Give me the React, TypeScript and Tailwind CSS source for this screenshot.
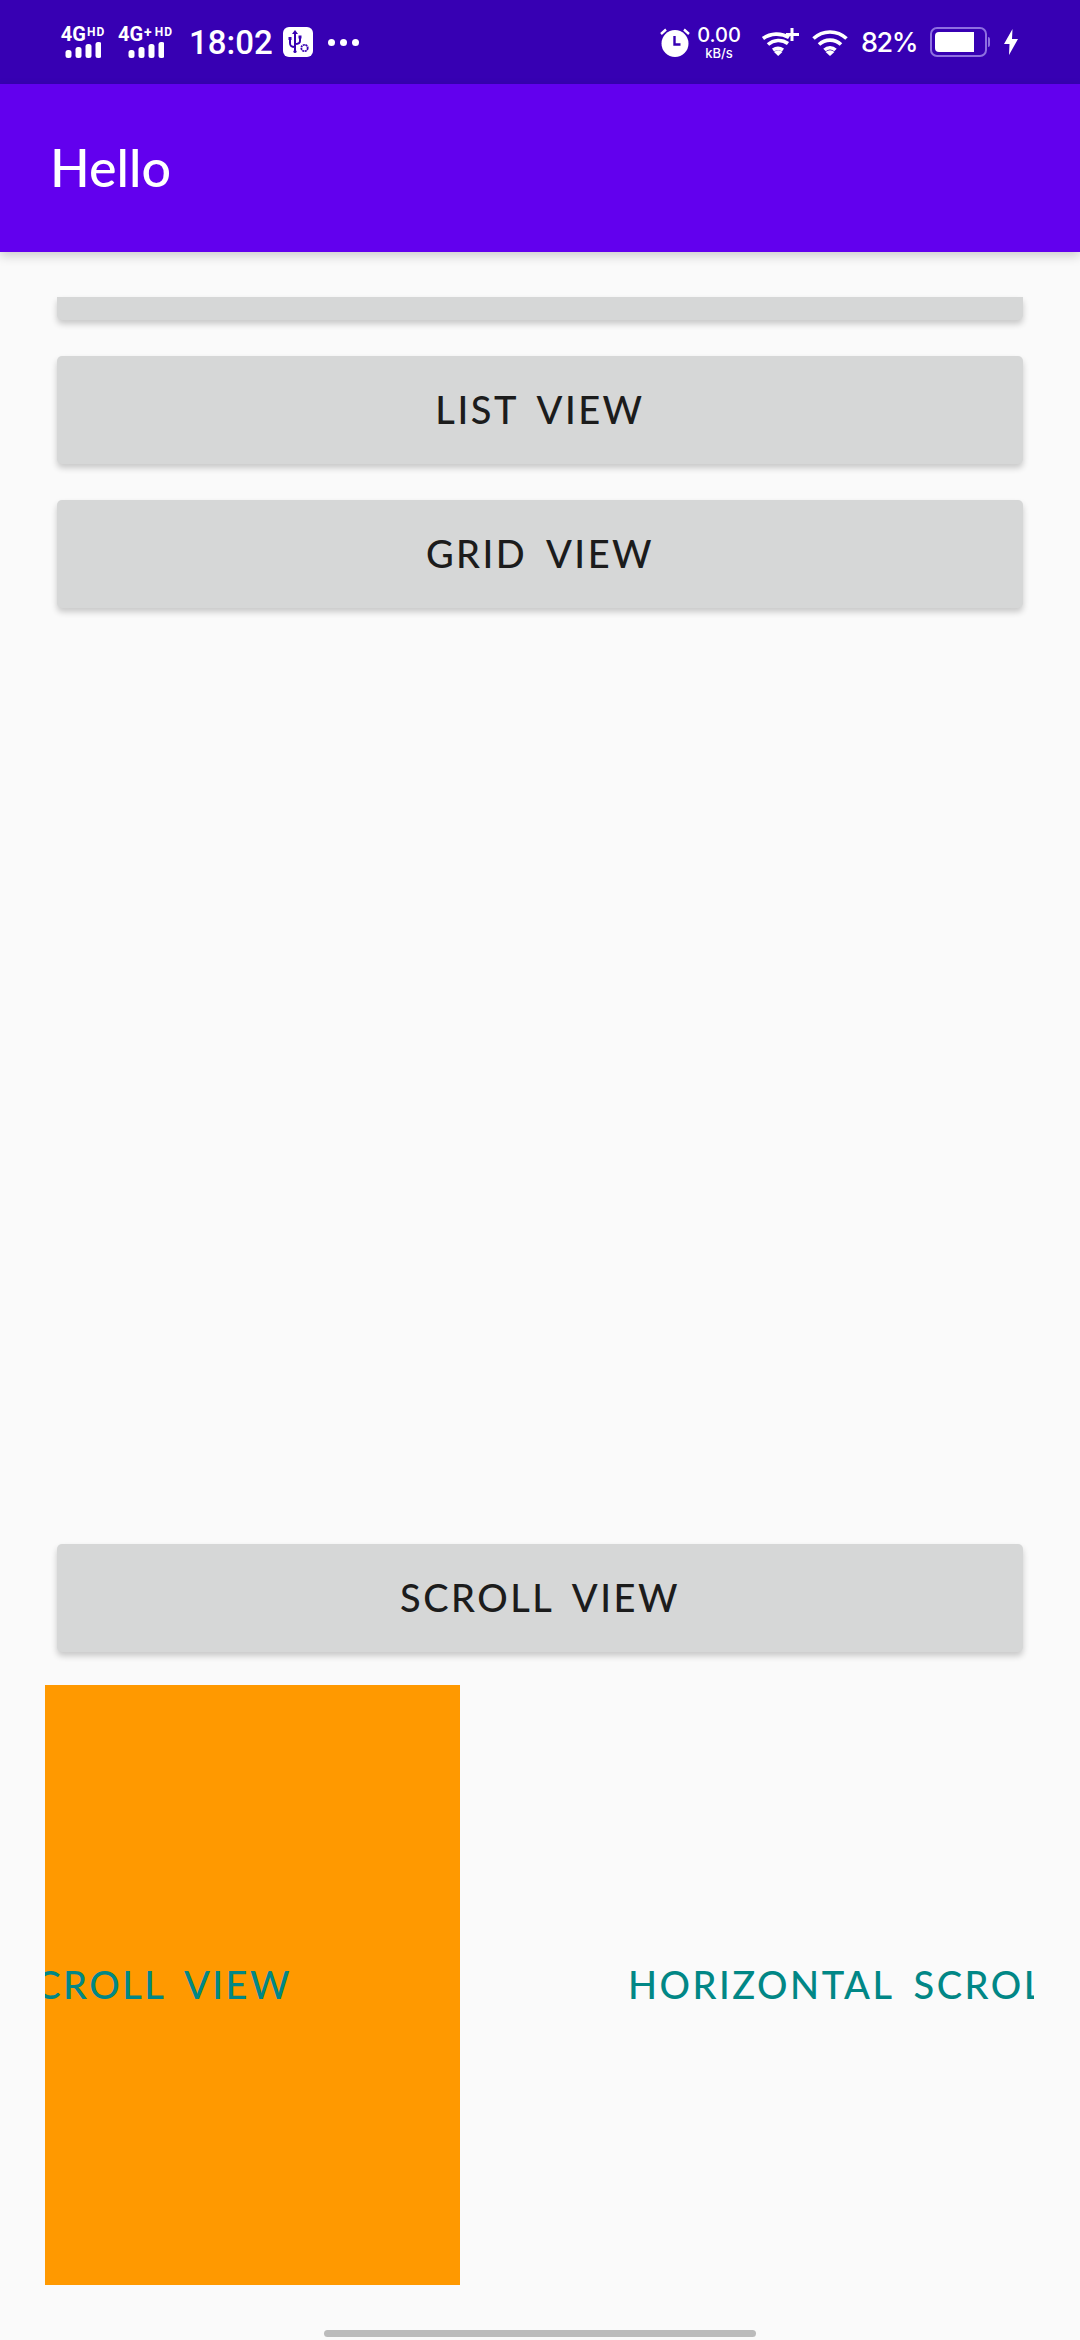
const font = "font-['Lato','Liberation_Sans',sans-serif]";

function Signal() {
  const bars = [8, 11, 14, 16];
  return (
    <svg width="36" height="16" viewBox="0 0 36 16" fill="#fff" className="block">
      {bars.map((h, i) => (
        <rect key={i} x={i * 10 + 0.5} y={16 - h} width="6" height={h} rx="2.5" />
      ))}
    </svg>
  );
}

function NetBadge({ plus, width }: { plus?: boolean; width: string }) {
  return (
    <div className={`flex flex-col items-center ${width}`}>
      <div className="flex items-start h-[15px] whitespace-nowrap text-white font-bold font-['Roboto',sans-serif]">
        <span className="text-[20px] leading-[15px]">4G</span>
        {plus ? <span className="text-[14px] leading-[10px] ml-[1px] mr-[2px]">+</span> : null}
        <span className="text-[12px] leading-[11px] tracking-[1px] ml-[1px]">HD</span>
      </div>
      <Signal />
    </div>
  );
}

function Usb() {
  return (
    <div className="w-[30px] h-[30px] rounded-[6px] bg-white flex items-center justify-center">
      <svg width="26" height="26" viewBox="0 0 26 26" fill="none" stroke="#3700B3" strokeWidth="2">
        <path d="M10 23V4M10 18c-4 0-5-1-5-4v-3M10 15c3 0 5-1 5-3V9" />
        <path d="M10 1l3 4H7z" fill="#3700B3" stroke="none" />
        <rect x="3.5" y="8" width="3" height="3" fill="#3700B3" stroke="none" />
        <rect x="13.5" y="6.5" width="3" height="3" fill="#3700B3" stroke="none" />
        <circle cx="10" cy="22.5" r="1.6" fill="#3700B3" stroke="none" />
        <circle cx="19.5" cy="19" r="3.2" strokeWidth="1.8" strokeDasharray="2 0.6" />
      </svg>
    </div>
  );
}

function Alarm() {
  return (
    <svg width="30" height="30" viewBox="0 0 30 30" className="shrink-0">
      <circle cx="15" cy="16.5" r="13.5" fill="#fff" />
      <path d="M14.5 9v8.5h6" fill="none" stroke="#3700B3" strokeWidth="2.4" />
      <path d="M1 7l5-4.5M29 7l-5-4.5" stroke="#fff" strokeWidth="2.4" />
    </svg>
  );
}

function WifiPlus() {
  return (
    <svg width="38" height="29" viewBox="0 0 38 29" fill="none" stroke="#fff" strokeWidth="3.6" className="block">
      <path d="M2 10.5a24 24 0 0 1 26-1" />
      <path d="M7 16.5a16 16 0 0 1 20-1" />
      <path d="M12 22a9 9 0 0 1 10 0" />
      <path d="M17.2 28l-4.2-4a6 6 0 0 1 8.4 0z" fill="#fff" stroke="none" />
      <path d="M31 0v13M25 6.5h13" strokeWidth="3" />
    </svg>
  );
}

function WifiPlain() {
  return (
    <svg width="36" height="29" viewBox="0 0 36 29" fill="none" stroke="#fff" strokeWidth="3.6" className="block">
      <path d="M1.5 10.5a24 24 0 0 1 33 0" />
      <path d="M7 16.5a16 16 0 0 1 22 0" />
      <path d="M12.5 22a8 8 0 0 1 11 0" />
      <path d="M18 28l-4.4-4a6.2 6.2 0 0 1 8.8 0z" fill="#fff" stroke="none" />
    </svg>
  );
}

function Battery() {
  return (
    <div className="flex items-center">
      <div className="w-[57px] h-[30px] rounded-[7px] border-2 border-[#8E6FE0] p-[3px]">
        <div className="w-[39px] h-full bg-white rounded-l-[4px]" />
      </div>
      <div className="w-[2px] h-[10px] ml-[1px] rounded-r-[2px] bg-[#8E6FE0]" />
    </div>
  );
}

function Bolt() {
  return (
    <svg width="14" height="26" viewBox="0 0 14 26" fill="#fff" className="block">
      <path d="M8.5 0L0 15h5.5L5 26l9-16H8z" />
    </svg>
  );
}

function StatusBar() {
  return (
    <div className="h-[84px] bg-[#3700B3] flex items-center justify-between pl-[60px] pr-[62px] text-white">
      <div className="flex items-center">
        <NetBadge width="w-[46px]" />
        <div className="ml-[12px]">
          <NetBadge plus width="w-[55px]" />
        </div>
        <span className="ml-[16px] text-[33px] leading-none font-medium font-['Roboto',sans-serif]">18:02</span>
        <div className="ml-[10px]">
          <Usb />
        </div>
        <div className="ml-[15px] flex gap-[5px]">
          <span className="w-[7px] h-[7px] rounded-full bg-white" />
          <span className="w-[7px] h-[7px] rounded-full bg-white" />
          <span className="w-[7px] h-[7px] rounded-full bg-white" />
        </div>
      </div>
      <div className="flex items-center">
        <Alarm />
        <div className="ml-[6px] w-[46px] flex flex-col items-center font-['Inter',sans-serif] font-medium">
          <span className="text-[20px] leading-[22px]">0.00</span>
          <span className="text-[13px] leading-[14px]">kB/s</span>
        </div>
        <div className="ml-[19px]">
          <WifiPlus />
        </div>
        <div className="ml-[13px]">
          <WifiPlain />
        </div>
        <span className="ml-[13px] text-[27px] leading-none tracking-[-1.5px] font-medium font-['Inter',sans-serif]">82%</span>
        <div className="ml-[13px]">
          <Battery />
        </div>
        <div className="ml-[14px]">
          <Bolt />
        </div>
      </div>
    </div>
  );
}

function ViewButton({ label }: { label: string }) {
  return (
    <div
      className={`h-[108px] pb-[2px] rounded-[5px] bg-[#D6D7D7] shadow-[0_4px_6px_rgba(0,0,0,0.2)] flex items-center justify-center text-[#1C1C1C] text-[38px] font-medium tracking-[2.5px] [word-spacing:8px] ${font}`}
    >
      {label}
    </div>
  );
}

export default function App() {
  return (
    <div className={`w-[1080px] h-[2340px] bg-[#FAFAFA] overflow-hidden flex flex-col ${font}`}>
      <StatusBar />
      <header className="relative z-10 h-[168px] bg-[#6200EE] flex items-center pl-[50px] pb-[3px] shadow-[0_4px_10px_rgba(0,0,0,0.18)]">
        <span className="text-white text-[52px] font-medium leading-none">Hello</span>
      </header>
      <main className="flex-1 flex flex-col pt-[45px]">
        <div className="px-[57px]">
          <div className="h-[23px] rounded-b-[5px] bg-[#D6D7D7] shadow-[0_4px_6px_rgba(0,0,0,0.2)]" />
          <div className="mt-[36px]">
            <ViewButton label="LIST VIEW" />
          </div>
          <div className="mt-[36px]">
            <ViewButton label="GRID VIEW" />
          </div>
          <div className="mt-[936px]">
            <ViewButton label="SCROLL VIEW" />
          </div>
        </div>
        <div className="mt-[33px] ml-[45px] w-[989px] h-[600px] flex overflow-hidden text-[#018786] text-[38px] font-medium tracking-[2.5px] [word-spacing:8px] whitespace-nowrap">
          <div className="w-[415px] shrink-0 bg-[#FF9900] flex items-center justify-end pr-[168px] pb-[2px] overflow-hidden">
            <span className="shrink-0">HORIZONTAL SCROLL VIEW</span>
          </div>
          <div className="ml-[168px] pb-[2px] flex items-center shrink-0">
            <span>HORIZONTAL SCROLL VIEW</span>
          </div>
        </div>
        <div className="mt-[45px] mx-auto w-[432px] h-[7px] rounded-full bg-[#BBBBBB]" />
      </main>
    </div>
  );
}
